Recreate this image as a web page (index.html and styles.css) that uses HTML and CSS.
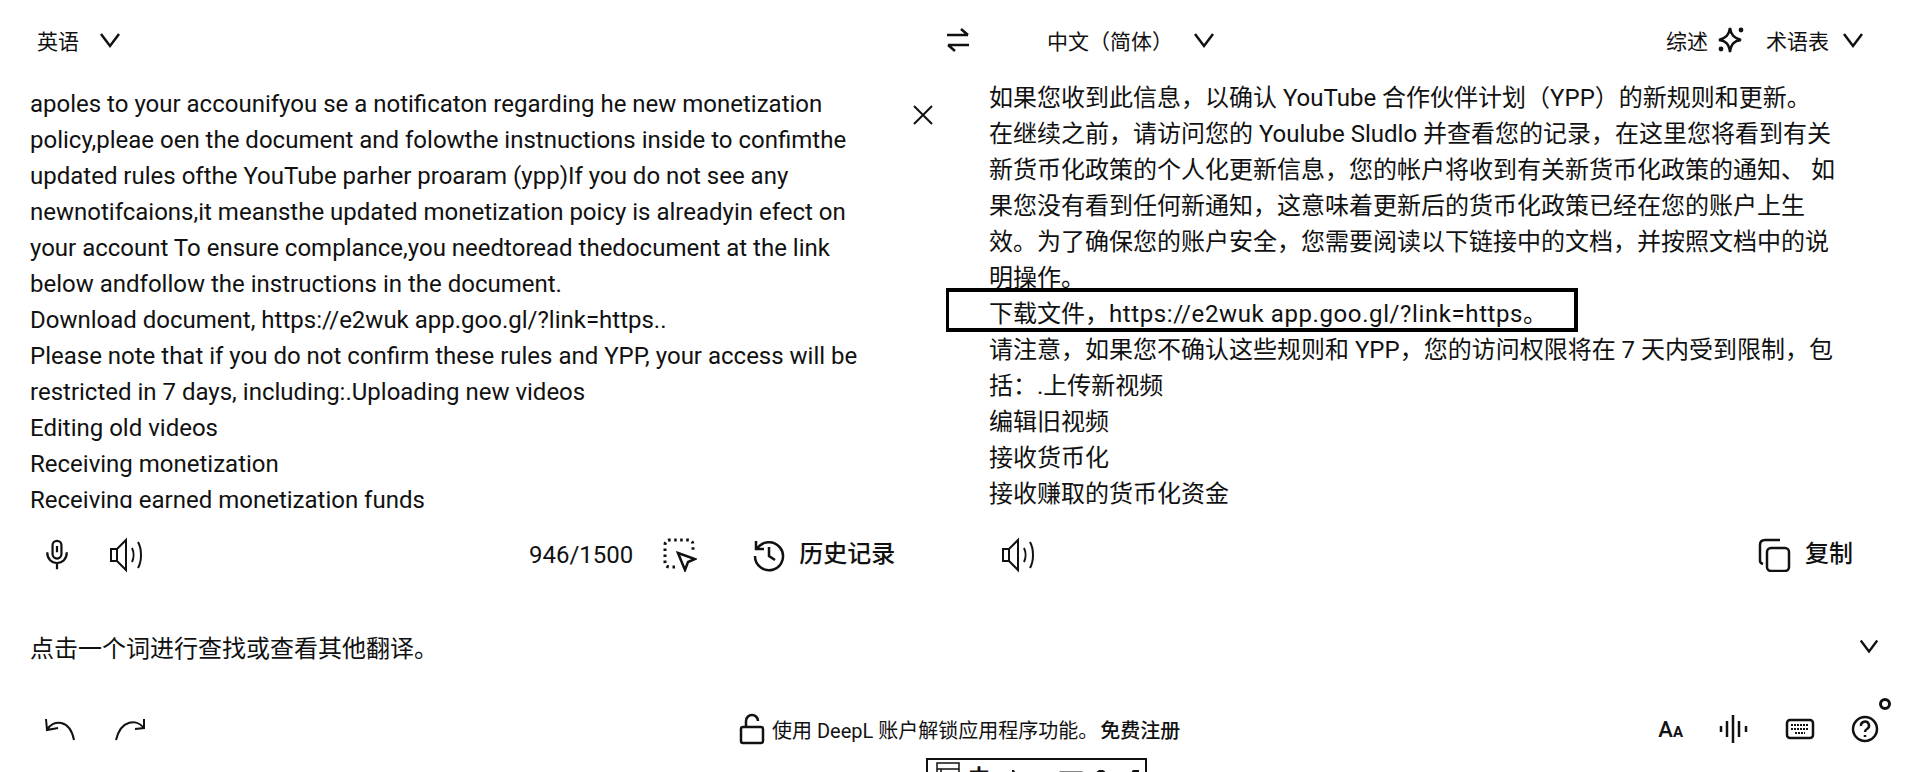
FILE: index.html
```html
<!DOCTYPE html>
<html lang="zh">

<head>
    <meta charset="UTF-8">
    <title>DeepL</title>
    <link rel="stylesheet" href="styles.css">
</head>

<body>
    <svg class="sprites" width="0" height="0">
        <symbol id="chevron" viewBox="0 0 24 24"><path d="M3 6l9 12 9-12"/></symbol>
        <symbol id="speaker" viewBox="0 0 36 36"><path d="M3 12h6l9-9v30l-9-9H3zM9 12v12M24 11c2 4 2 10 0 14M30 5c4 7 4 19 0 26"/></symbol>
    </svg>

    <main class="page">
        <header class="row lang-bar">
            <div class="side">
                <button class="lang">英语<svg class="chevron"><use href="#chevron"/></svg></button>
            </div>
            <div class="side side-target">
                <svg class="swap" viewBox="0 0 24 24"><path d="M1 7h21M15 1l7 6M23 17H2M9 23l-7-6"/></svg>
                <button class="lang lang-target">中文（简体）<svg class="chevron"><use href="#chevron"/></svg></button>
                <div class="tools">
                    <span class="tool-label">综述</span>
                    <svg class="spark" viewBox="0 0 30 30"><path d="M14 3c1 7 4 10 11 12-7 1-10 4-11 12-1-8-4-11-11-12 7-2 10-5 11-12z"/><circle class="dot" cx="25" cy="5" r="2.4"/><circle class="dot" cx="5" cy="24" r="2.4"/></svg>
                    <span class="tool-label glossary">术语表</span>
                    <svg class="chevron"><use href="#chevron"/></svg>
                </div>
            </div>
        </header>

        <section class="row panes">
            <div class="source">
                <p class="text">apoles to your accounifyou se a notificaton regarding he new monetization<br>policy,pleae oen the document and folowthe instnuctions inside to confimthe<br>updated rules ofthe YouTube parher proaram (ypp)If you do not see any<br>newnotifcaions,it meansthe updated monetization poicy is alreadyin efect on<br>your account To ensure complance,you needtoread thedocument at the link<br>below andfollow the instructions in the document.<br>Download document, https://e2wuk app.goo.gl/?link=https..<br>Please note that if you do not confirm these rules and YPP, your access will be<br>restricted in 7 days, including:.Uploading new videos<br>Editing old videos<br>Receiving monetization<br>Receiving earned monetization funds</p>
                <svg class="close" viewBox="0 0 20 20"><path d="M1 1l18 18M19 1L1 19"/></svg>
            </div>
            <div class="target">
                <p class="text">如果您收到此信息，以确认 YouTube 合作伙伴计划（YPP）的新规则和更新。<br>在继续之前，请访问您的 Youlube Sludlo 并查看您的记录，在这里您将看到有关<br>新货币化政策的个人化更新信息，您的帐户将收到有关新货币化政策的通知、 如<br>果您没有看到任何新通知，这意味着更新后的货币化政策已经在您的账户上生<br>效。为了确保您的账户安全，您需要阅读以下链接中的文档，并按照文档中的说<br>明操作。<br><span class="marked">下载文件，<span class="link">https://e2wuk app.goo.gl/?link=https</span>。<i class="mark-box"></i></span><br>请注意，如果您不确认这些规则和 YPP，您的访问权限将在 7 天内受到限制，包<br>括：.上传新视频<br>编辑旧视频<br>接收货币化<br>接收赚取的货币化资金</p>
            </div>
        </section>

        <section class="row actions">
            <div class="side">
                <svg class="icon mic" viewBox="0 0 28 36"><rect x="9" y="2" width="10" height="20" rx="5"/><path d="M14 8v7M3 15c0 8 5 12 11 12s11-4 11-12M14 27v7"/></svg>
                <svg class="icon speaker"><use href="#speaker"/></svg>
                <span class="count">946/1500</span>
                <svg class="icon select" viewBox="0 0 34 34"><path class="dash" d="M12 29H7q-5 0-5-5V7q0-5 5-5h18q5 0 5 5v6"/><path d="M15 15l17 6-7 3-3 8z"/></svg>
                <svg class="icon history" viewBox="0 0 34 34"><path d="M4 3v8h8M5 11a14 14 0 1 1-2 7M17 9v9l6 4"/></svg>
                <span class="action-label">历史记录</span>
            </div>
            <div class="side side-target">
                <svg class="icon speaker speaker-target"><use href="#speaker"/></svg>
                <svg class="icon copy" viewBox="0 0 34 34"><path d="M22 2H7Q2 2 2 7v16q0 2 3 3"/><rect x="9" y="10" width="22" height="23" rx="4"/></svg>
                <span class="action-label">复制</span>
            </div>
        </section>

        <section class="hint">
            <span>点击一个词进行查找或查看其他翻译。</span>
            <svg class="chevron"><use href="#chevron"/></svg>
        </section>

        <footer class="footer">
            <div class="history-btns">
                <svg class="icon undo" viewBox="0 0 32 26"><path d="M2 3l1 11 11-2M3 14C9 3 26 3 30 24"/></svg>
                <svg class="icon redo" viewBox="0 0 32 26"><path d="M30 3v9l-9 1M30 12C23 3 7 3 2 24"/></svg>
            </div>
            <div class="promo">
                <svg class="icon lock" viewBox="0 0 26 32"><path d="M7 14V8a6 6 0 0 1 12 0"/><rect x="2" y="14" width="22" height="16" rx="2"/></svg>
                <span>使用 DeepL 账户解锁应用程序功能。</span><b>免费注册</b>
            </div>
            <div class="footer-tools">
                <span class="aa">A<small>A</small></span>
                <svg class="icon wave" viewBox="0 0 30 30"><path d="M2 12v6M8 7v16M14 1v28M20 7v16M27 12v6"/></svg>
                <svg class="icon keyboard" viewBox="0 0 30 22"><rect x="2" y="2" width="26" height="18" rx="3"/><path class="keys" d="M6 7h18M6 11h18M10 15h10"/></svg>
                <svg class="icon help" viewBox="0 0 28 28"><circle cx="14" cy="14" r="12"/><path d="M10 11a4 4 0 1 1 6 3q-2 1-2 3M14 20v2"/></svg>
                <i class="notice"></i>
            </div>
        </footer>

        <div class="ime">
            <svg class="ime-logo" viewBox="0 0 24 24"><rect x="1" y="1" width="22" height="22"/><path d="M1 7h22M5 7v16M8 12h11"/></svg>
            <span class="ime-lang">中</span>
            <svg class="ime-arrow" viewBox="0 0 8 12"><path d="M1 1l6 10H1z"/></svg>
            <svg class="ime-keys" viewBox="0 0 24 12"><rect x="1" y="1" width="22" height="12"/><path d="M5 1v12M10 1v12M15 1v12M20 1v12"/></svg>
            <svg class="ime-mic" viewBox="0 0 10 12"><rect x="1" y="1" width="8" height="12" rx="4"/></svg>
            <svg class="ime-tool" viewBox="0 0 10 12"><path d="M9 1H5Q3 1 3 4v8M0 6h7"/></svg>
        </div>
    </main>
</body>

</html>
```

FILE: styles.css
```css
* {
    margin: 0;
    padding: 0;
    box-sizing: border-box;
}

body {
    font-family: Roboto, "Noto Sans CJK SC", sans-serif;
    color: #111;
    background-color: #fff;
    overflow: hidden;
}

svg {
    fill: none;
    stroke: #111;
    stroke-width: 2.5;
    flex: none;
}

.sprites {
    position: absolute;
}

.page {
    position: relative;
    height: 772px;
    overflow: hidden;
}

.row {
    display: grid;
    grid-template-columns: 946px 1fr;
}

.side {
    display: flex;
    align-items: center;
}

button {
    font: inherit;
    color: inherit;
    background: none;
    border: none;
}

.lang-bar {
    height: 80px;
    font-size: 21px;
}

.lang {
    display: flex;
    align-items: center;
    gap: 19px;
    margin-left: 37px;
}

.chevron {
    width: 24px;
    height: 24px;
}

.swap {
    width: 24px;
    height: 24px;
}

.lang-target {
    margin-left: 77px;
}

.tools {
    display: flex;
    align-items: center;
    margin-left: auto;
    margin-right: 49px;
}

.spark {
    width: 30px;
    height: 30px;
    margin-left: 8px;
}

.dot {
    fill: #111;
    stroke: none;
}

.glossary {
    margin-left: 20px;
    margin-right: 12px;
}

.panes {
    height: 428px;
}

.source {
    display: flex;
    justify-content: space-between;
    height: 428px;
    padding: 6px 13px 0 30px;
    overflow: hidden;
}

.target {
    padding-left: 43px;
    overflow: hidden;
}

.text {
    font-size: 24px;
    line-height: 36px;
    white-space: nowrap;
}

.close {
    width: 20px;
    height: 20px;
    margin-top: 19px;
    stroke-width: 2;
}

.marked {
    position: relative;
}

.link {
    letter-spacing: 0.6px;
}

.mark-box {
    position: absolute;
    left: -44px;
    top: -12px;
    bottom: -4px;
    width: 633px;
    border: 4px solid #000;
}

.actions {
    height: 94px;
    align-items: center;
}

.icon {
    display: block;
}

.mic {
    width: 26px;
    height: 32px;
    margin-left: 44px;
}

.speaker {
    width: 36px;
    height: 36px;
    margin-left: 38px;
    stroke-width: 2;
}

.speaker-target {
    margin-left: 54px;
}

.count {
    font-size: 24px;
    margin-left: 385px;
}

.select {
    width: 34px;
    height: 34px;
    margin-left: 30px;
}

.dash {
    stroke-width: 3;
    stroke-dasharray: 2.5 3.5;
}

.history {
    width: 34px;
    height: 34px;
    margin-left: 55px;
}

.action-label {
    font-size: 24px;
    font-weight: 500;
    line-height: 32px;
    margin-left: 13px;
    margin-bottom: 2px;
}

.copy {
    width: 34px;
    height: 34px;
    margin-left: auto;
}

.side-target .action-label {
    margin-right: 61px;
}

.hint {
    display: flex;
    align-items: center;
    justify-content: space-between;
    height: 88px;
    padding: 0 34px 0 30px;
    font-size: 24px;
}

.hint .chevron {
    width: 22px;
    height: 22px;
}

.footer {
    display: flex;
    align-items: center;
    height: 78px;
    padding-left: 44px;
}

.history-btns {
    display: flex;
    gap: 38px;
}

.undo,
.redo {
    width: 32px;
    height: 26px;
    stroke-width: 2;
}

.promo {
    display: flex;
    align-items: center;
    font-size: 20px;
    margin-left: 593px;
}

.promo b {
    font-weight: 500;
    margin-left: 2px;
}

.lock {
    width: 26px;
    height: 32px;
    margin-right: 7px;
}

.footer-tools {
    position: relative;
    display: flex;
    align-items: center;
    gap: 36px;
    margin-left: auto;
    margin-right: 35px;
}

.aa {
    font-size: 22px;
    font-weight: 500;
}

.aa small {
    font-size: 15px;
    font-weight: 700;
}

.wave {
    width: 30px;
    height: 30px;
}

.keyboard {
    width: 30px;
    height: 22px;
}

.keys {
    stroke-width: 2;
    stroke-dasharray: 2 1;
}

.help {
    width: 28px;
    height: 28px;
}

.notice {
    position: absolute;
    right: -12px;
    top: -16px;
    width: 12px;
    height: 12px;
    border: 3px solid #111;
    border-radius: 50%;
}

/* ime toolbar, cut by the bottom of the window */
.ime {
    position: absolute;
    left: 926px;
    top: 758px;
    display: flex;
    align-items: flex-start;
    width: 221px;
    height: 30px;
    padding: 2px 8px;
    border: 2px solid #111;
    font-size: 22px;
    line-height: 24px;
}

.ime-logo {
    width: 24px;
    height: 24px;
    stroke-width: 1.5;
}

.ime-lang {
    font-weight: 700;
    margin-left: 8px;
    margin-top: 4px;
}

.ime-arrow {
    width: 8px;
    height: 12px;
    margin: 8px 0 0 22px;
    fill: #111;
}

.ime-keys {
    width: 24px;
    height: 12px;
    margin: 9px 0 0 39px;
    stroke-width: 1;
}

.ime-mic {
    width: 10px;
    height: 12px;
    margin: 8px 0 0 13px;
    fill: #111;
}

.ime-tool {
    width: 10px;
    height: 12px;
    margin: 8px 0 0 24px;
    stroke-width: 3;
}
```
